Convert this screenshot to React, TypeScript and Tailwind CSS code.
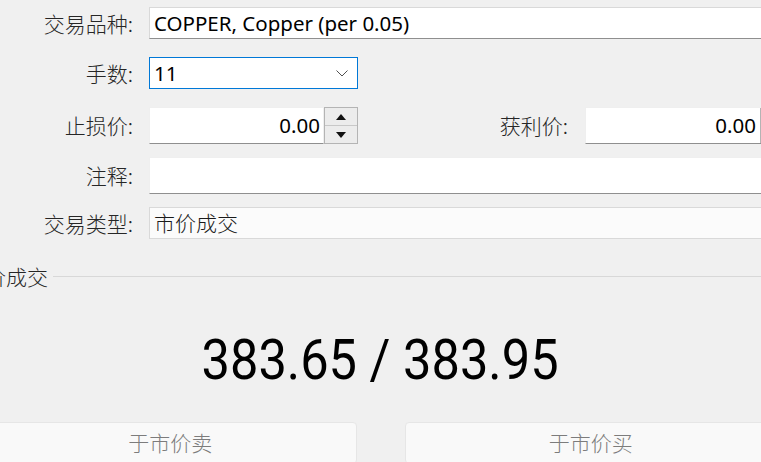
import React from "react";

const ui = { fontFamily: '"Noto Sans", "Noto Sans CJK SC", sans-serif' };
const cjk = { fontFamily: '"Noto Sans CJK SC", "Noto Sans", sans-serif' };

function Label({ children, w = "w-[133px]" }: { children: React.ReactNode; w?: string }) {
  return (
    <div className={`${w} shrink-0 text-right text-[21px] font-light leading-none text-[#262626]`} style={cjk}>
      {children}
    </div>
  );
}

function Spin() {
  return (
    <div className="flex h-[37px] w-[34px] shrink-0 flex-col border border-[#b4b4b4] bg-[#f0f0f0]">
      <div className="flex flex-1 items-center justify-center border-b border-[#c8c8c8] bg-[#ececec]">
        <svg width="10" height="6" viewBox="0 0 10 6"><path d="M0 6 L5 0 L10 6 Z" fill="#111" /></svg>
      </div>
      <div className="flex flex-1 items-center justify-center bg-[#ececec]">
        <svg width="10" height="6" viewBox="0 0 10 6"><path d="M0 0 L5 6 L10 0 Z" fill="#111" /></svg>
      </div>
    </div>
  );
}

export default function App() {
  return (
    <div className="relative h-[462px] w-[761px] overflow-hidden bg-[#f0f0f0]" style={ui}>
      <div className="flex flex-col pt-[7px]">
        {/* Row 1 */}
        <div className="flex items-center gap-4">
          <Label>交易品种:</Label>
          <div className="flex h-[32px] w-[640px] shrink-0 items-center border border-[#d9d9d9] border-b-[#8f8f8f] bg-white pl-[4px] text-[20.5px] text-black">
            COPPER, Copper (per 0.05)
          </div>
        </div>
        {/* Row 2 */}
        <div className="mt-[18px] flex items-center gap-4">
          <Label>手数:</Label>
          <div className="flex h-[32px] w-[209px] shrink-0 items-center justify-between border border-[#0078d7] bg-white pl-[4px] pr-[9px] text-[20.5px] text-black">
            <span>11</span>
            <svg width="12" height="7" viewBox="0 0 12 7">
              <path d="M0.5 0.5 L6 6 L11.5 0.5" fill="none" stroke="#505050" strokeWidth="1" />
            </svg>
          </div>
        </div>
        {/* Row 3 */}
        <div className="mt-[18px] flex items-center gap-4">
          <Label>止损价:</Label>
          <div className="flex h-[37px] w-[209px] shrink-0">
            <div className="flex h-[37px] flex-1 items-center justify-end border border-[#efefef] border-b-[#8f8f8f] bg-white pr-[3px] text-[20.5px] text-black">
              0.00
            </div>
            <Spin />
          </div>
          <div className="flex items-center gap-[17px]">
            <Label w="w-[194px]">获利价:</Label>
            <div className="flex h-[37px] w-[220px] shrink-0 items-center border border-[#efefef] border-b-[#8f8f8f] bg-white pl-[3px] text-[20.5px] text-black">
              <span className="w-[167px] text-right">0.00</span>
              <span className="ml-[4px] h-full border-l border-[#b4b4b4]" />
            </div>
          </div>
        </div>
        {/* Row 4 */}
        <div className="mt-[13px] flex items-center gap-4">
          <Label>注释:</Label>
          <div className="h-[37px] w-[640px] shrink-0 border border-[#efefef] border-b-[#8f8f8f] bg-white" />
        </div>
        {/* Row 5 */}
        <div className="mt-[13px] flex items-center gap-4">
          <Label>交易类型:</Label>
          <div className="flex h-[32px] w-[640px] shrink-0 items-center border border-[#d9d9d9] bg-[#fbfbfb] pl-[4px] text-[21px] font-light text-[#1a1a1a]" style={cjk}>
            市价成交
          </div>
        </div>

        {/* Group header */}
        <div className="ml-[-36px] mt-[27px] flex items-center gap-[5px]">
          <span className="text-[21px] font-light leading-none text-[#262626]" style={cjk}>市价成交</span>
          <div className="h-px flex-1 bg-[#d8d8d8]" />
        </div>

        {/* Big price */}
        <div className="mx-[-18px] mt-[46px] flex justify-center">
          <div className="scale-x-[0.92] text-[55px] leading-none text-black" style={{ fontFamily: 'Roboto, "Liberation Sans", sans-serif' }}>
            383.65 / 383.95
          </div>
        </div>

        {/* Buttons */}
        <div className="mx-[-16px] mt-[34px] flex gap-[48px]">
          <div className="flex h-[42px] flex-1 items-center justify-center rounded-[4px] border border-[#e6e6e6] bg-[#f9f9f9] text-[21px] font-light text-[#7c7c7c]" style={cjk}>
            于市价卖
          </div>
          <div className="flex h-[42px] flex-1 items-center justify-center rounded-[4px] border border-[#e6e6e6] bg-[#f9f9f9] text-[21px] font-light text-[#7c7c7c]" style={cjk}>
            于市价买
          </div>
        </div>
      </div>
    </div>
  );
}
